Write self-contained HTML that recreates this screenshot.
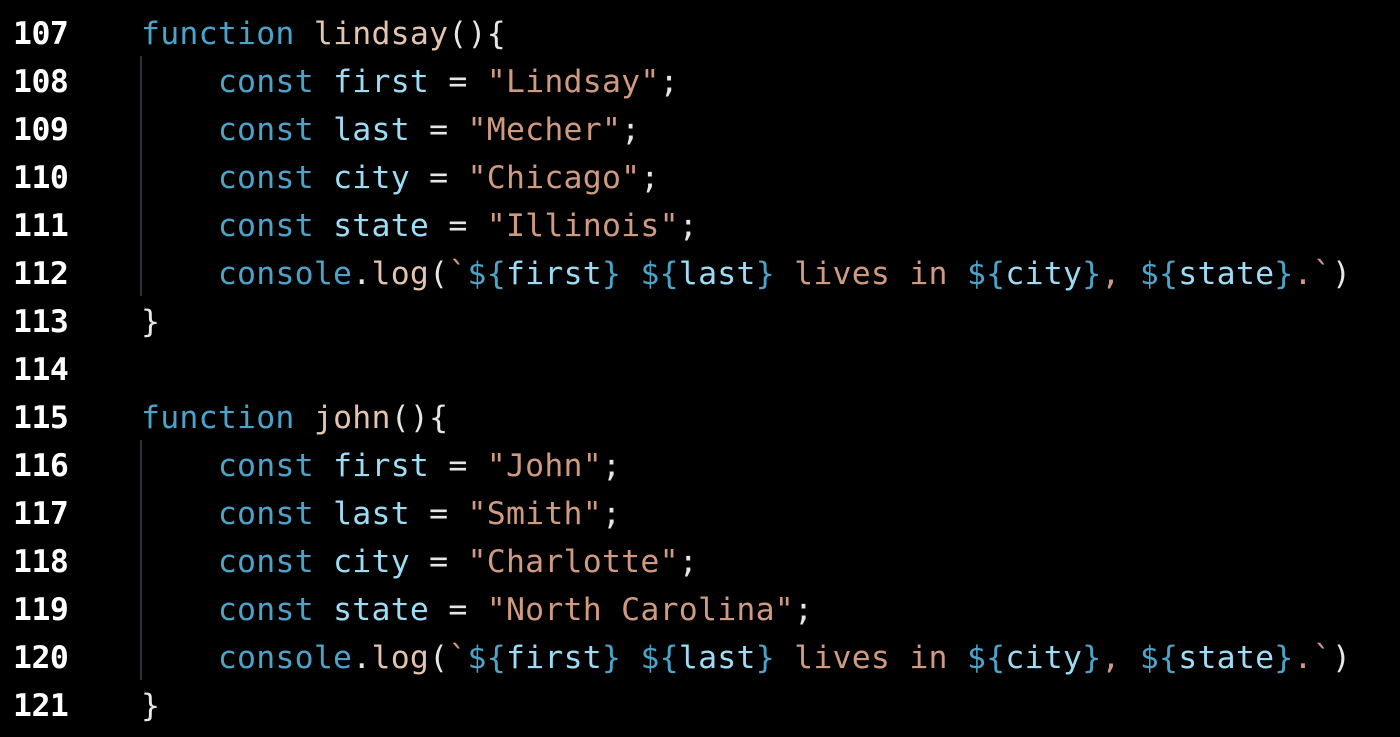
<!DOCTYPE html>
<html><head><meta charset="utf-8"><style>
body{margin:0;background:#000;width:1400px;height:737px;overflow:hidden;position:relative}
.l{position:absolute;left:0;height:48px;line-height:48px;font-family:"DejaVu Sans Mono","Liberation Mono",monospace;font-size:31.5px;white-space:pre;letter-spacing:0.24px;margin-top:2px}
.n{position:absolute;left:13px;color:#fff;font-weight:bold;letter-spacing:-0.5px}
.c{position:absolute;left:141px;color:#e6e6e6}
.k{color:#4aa3c9}.v{color:#9cdcf5}.s{color:#d09a80}.f{color:#e3c4ae}.p{color:#e6e6e6}
.g{position:absolute;left:140px;width:2px;background:#24333d}
</style></head><body>
<div class="g" style="top:56px;height:240px"></div>
<div class="g" style="top:440px;height:240px"></div>
<div class="l" style="top:8px"><span class="n">107</span><span class="c"><span class="k">function</span> <span class="f">lindsay</span>(){</span></div>
<div class="l" style="top:56px"><span class="n">108</span><span class="c">    <span class="k">const</span> <span class="v">first</span> = <span class="s">"Lindsay"</span>;</span></div>
<div class="l" style="top:104px"><span class="n">109</span><span class="c">    <span class="k">const</span> <span class="v">last</span> = <span class="s">"Mecher"</span>;</span></div>
<div class="l" style="top:152px"><span class="n">110</span><span class="c">    <span class="k">const</span> <span class="v">city</span> = <span class="s">"Chicago"</span>;</span></div>
<div class="l" style="top:200px"><span class="n">111</span><span class="c">    <span class="k">const</span> <span class="v">state</span> = <span class="s">"Illinois"</span>;</span></div>
<div class="l" style="top:248px"><span class="n">112</span><span class="c">    <span class="k">console</span>.<span class="f">log</span>(<span class="s">`</span><span class="k">${</span><span class="v">first</span><span class="k">}</span><span class="s"> </span><span class="k">${</span><span class="v">last</span><span class="k">}</span><span class="s"> lives in </span><span class="k">${</span><span class="v">city</span><span class="k">}</span><span class="s">, </span><span class="k">${</span><span class="v">state</span><span class="k">}</span><span class="s">.`</span>)</span></div>
<div class="l" style="top:296px"><span class="n">113</span><span class="c">}</span></div>
<div class="l" style="top:344px"><span class="n">114</span></div>
<div class="l" style="top:392px"><span class="n">115</span><span class="c"><span class="k">function</span> <span class="f">john</span>(){</span></div>
<div class="l" style="top:440px"><span class="n">116</span><span class="c">    <span class="k">const</span> <span class="v">first</span> = <span class="s">"John"</span>;</span></div>
<div class="l" style="top:488px"><span class="n">117</span><span class="c">    <span class="k">const</span> <span class="v">last</span> = <span class="s">"Smith"</span>;</span></div>
<div class="l" style="top:536px"><span class="n">118</span><span class="c">    <span class="k">const</span> <span class="v">city</span> = <span class="s">"Charlotte"</span>;</span></div>
<div class="l" style="top:584px"><span class="n">119</span><span class="c">    <span class="k">const</span> <span class="v">state</span> = <span class="s">"North Carolina"</span>;</span></div>
<div class="l" style="top:632px"><span class="n">120</span><span class="c">    <span class="k">console</span>.<span class="f">log</span>(<span class="s">`</span><span class="k">${</span><span class="v">first</span><span class="k">}</span><span class="s"> </span><span class="k">${</span><span class="v">last</span><span class="k">}</span><span class="s"> lives in </span><span class="k">${</span><span class="v">city</span><span class="k">}</span><span class="s">, </span><span class="k">${</span><span class="v">state</span><span class="k">}</span><span class="s">.`</span>)</span></div>
<div class="l" style="top:680px"><span class="n">121</span><span class="c">}</span></div>
</body></html>
